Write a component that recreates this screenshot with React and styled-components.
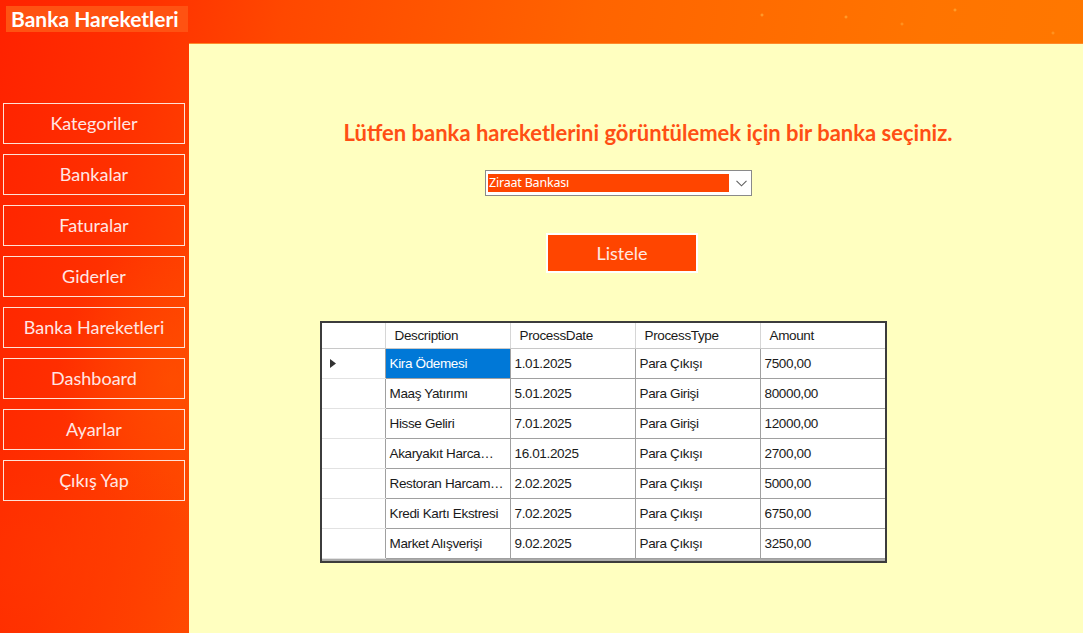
import React from 'react';
import styled, { createGlobalStyle } from 'styled-components';

const GlobalStyle = createGlobalStyle`
  html, body {
    margin: 0;
    padding: 0;
    height: 100%;
    overflow: hidden;
  }
  #root {
    height: 100%;
  }
`;

const Shell = styled.div`
  display: grid;
  grid-template-columns: 189px 1fr;
  grid-template-rows: 43px 1fr;
  height: 100vh;
  width: 100vw;
  font-family: 'Lato', 'Open Sans', sans-serif;
  background:
    radial-gradient(ellipse 220px 180px at 60px 560px, rgba(255, 60, 0, 0.5), transparent 70%),
    radial-gradient(ellipse 160px 200px at 170px 380px, rgba(255, 90, 0, 0.45), transparent 70%),
    linear-gradient(100deg, #ff2200 0%, #ff3000 12%, #ff4800 24%, #ff6400 50%, #ff7400 78%, #ff7a00 100%);
`;

const TopBar = styled.header`
  grid-column: 1 / -1;
  display: flex;
  align-items: flex-start;
  padding: 6px 0 0 6px;
  background-image:
    radial-gradient(circle 2px at 762px 15px, #ffb040, transparent),
    radial-gradient(circle 2px at 846px 17px, #ffb040, transparent),
    radial-gradient(circle 2px at 902px 24px, #ffa030, transparent),
    radial-gradient(circle 2px at 955px 10px, #ffb040, transparent),
    radial-gradient(circle 2px at 1053px 33px, #ffa030, transparent);
`;

const AppTitle = styled.div`
  background: #ff5212;
  color: #ffffff;
  font-weight: 700;
  font-size: 21px;
  line-height: 26px;
  width: 182px;
  box-sizing: border-box;
  padding-left: 5px;
  white-space: nowrap;
`;

const Sidebar = styled.nav`
  display: flex;
  flex-direction: column;
  gap: 10px;
  padding: 60px 4px 0 3px;
`;

const NavButton = styled.button`
  height: 41px;
  width: 182px;
  background: transparent;
  border: 1px solid #ffe2d6;
  color: #ffe6e4;
  font-family: 'Lato', 'Open Sans', sans-serif;
  font-size: 18px;
  line-height: 1;
  cursor: pointer;
  padding: 0 0 2px;
`;

const Main = styled.main`
  background: #ffffc0;
  border-top: 1px solid #ff8a2a;
  display: flex;
  flex-direction: column;
  align-items: flex-start;
`;

const Prompt = styled.h1`
  margin: 76px 0 0 149px;
  width: 620px;
  text-align: center;
  font-size: 22px;
  font-weight: 700;
  color: #ff4f14;
  line-height: 26px;
  white-space: nowrap;
`;

const Combo = styled.div`
  margin: 24px 0 0 296px;
  width: 267px;
  height: 26px;
  box-sizing: border-box;
  background: #ffffff;
  border: 1px solid #8a8a8a;
  display: flex;
  align-items: center;
  padding: 0 0 0 2px;
`;

const ComboValue = styled.div`
  flex: 0 0 241px;
  height: 18px;
  background: #ff4500;
  color: #ffffff;
  font-family: 'Noto Sans', 'Liberation Sans', sans-serif;
  font-size: 12.5px;
  line-height: 18px;
  letter-spacing: -0.2px;
  padding-left: 1px;
  box-sizing: border-box;
`;

const ComboArrow = styled.div`
  flex: 1;
  display: flex;
  justify-content: center;
  align-items: center;
  padding-left: 2px;
`;

const ListButton = styled.button`
  margin: 37px 0 0 357px;
  width: 152px;
  height: 40px;
  background: #ff4500;
  border: 2px solid #ffffff;
  color: #ffe8e0;
  font-family: 'Lato', 'Open Sans', sans-serif;
  font-size: 18px;
  padding: 0;
`;

const GridFrame = styled.div`
  margin: 48px 0 0 131px;
  width: 563px;
  height: 238px;
  border: 2px solid #3c3c3c;
  background: #ababab;
  overflow: hidden;
`;

const Table = styled.table`
  border-collapse: collapse;
  table-layout: fixed;
  width: 563px;
  font-family: 'Liberation Sans', Arial, sans-serif;
  font-size: 13.5px;
  letter-spacing: -0.35px;
  color: #1a1a1a;
  background: #ffffff;
`;

const HeadCell = styled.th`
  height: 25px;
  padding: 0 0 0 ${(p) => (p.$corner ? 0 : 9)}px;
  text-align: left;
  font-weight: 400;
  border-right: 1px solid #d6d6d6;
  border-bottom: 1px solid #c8c8c8;
  width: ${(p) => p.$w}px;
  box-sizing: border-box;
`;

const RowHead = styled.td`
  height: 30px;
  padding: 0 0 0 8px;
  border-right: 1px solid #a0a0a0;
  border-bottom: 1px solid #e2e2e2;
  box-sizing: border-box;
`;

const Cell = styled.td`
  height: 30px;
  padding: 0 5px 0 4px;
  border-right: 1px solid #a0a0a0;
  border-bottom: 1px solid #a0a0a0;
  background: ${(p) => (p.$selected ? '#0078d7' : '#ffffff')};
  color: ${(p) => (p.$selected ? '#ffffff' : '#1a1a1a')};
  white-space: nowrap;
  overflow: hidden;
  text-overflow: ellipsis;
  box-sizing: border-box;
`;

const navItems = [
  'Kategoriler',
  'Bankalar',
  'Faturalar',
  'Giderler',
  'Banka Hareketleri',
  'Dashboard',
  'Ayarlar',
  'Çıkış Yap',
];

const columns = [
  { title: 'Description', w: 125 },
  { title: 'ProcessDate', w: 125 },
  { title: 'ProcessType', w: 125 },
  { title: 'Amount', w: 125 },
];

const rows = [
  ['Kira Ödemesi', '1.01.2025', 'Para Çıkışı', '7500,00'],
  ['Maaş Yatırımı', '5.01.2025', 'Para Girişi', '80000,00'],
  ['Hisse Geliri', '7.01.2025', 'Para Girişi', '12000,00'],
  ['Akaryakıt Harcaması', '16.01.2025', 'Para Çıkışı', '2700,00'],
  ['Restoran Harcaması', '2.02.2025', 'Para Çıkışı', '5000,00'],
  ['Kredi Kartı Ekstresi', '7.02.2025', 'Para Çıkışı', '6750,00'],
  ['Market Alışverişi', '9.02.2025', 'Para Çıkışı', '3250,00'],
];

function RowPointer() {
  return (
    <svg width="7" height="9" viewBox="0 0 7 9">
      <path d="M0 0 L6 4.5 L0 9 Z" fill="#333" />
    </svg>
  );
}

export default function App() {
  return (
    <>
      <GlobalStyle />
      <Shell>
        <TopBar>
          <AppTitle>Banka Hareketleri</AppTitle>
        </TopBar>
        <Sidebar>
          {navItems.map((item) => (
            <NavButton key={item}>{item}</NavButton>
          ))}
        </Sidebar>
        <Main>
          <Prompt>Lütfen banka hareketlerini görüntülemek için bir banka seçiniz.</Prompt>
          <Combo>
            <ComboValue>Ziraat Bankası</ComboValue>
            <ComboArrow>
              <svg width="11" height="7" viewBox="0 0 11 7">
                <polyline points="0.5,0.8 5.5,5.8 10.5,0.8" fill="none" stroke="#606060" strokeWidth="1.1" />
              </svg>
            </ComboArrow>
          </Combo>
          <ListButton>Listele</ListButton>
          <GridFrame>
            <Table>
              <thead>
                <tr>
                  <HeadCell $corner $w={63} />
                  {columns.map((c) => (
                    <HeadCell key={c.title} $w={c.w}>
                      {c.title}
                    </HeadCell>
                  ))}
                </tr>
              </thead>
              <tbody>
                {rows.map((r, i) => (
                  <tr key={r[0]}>
                    <RowHead>{i === 0 && <RowPointer />}</RowHead>
                    {r.map((v, j) => (
                      <Cell key={j} $selected={i === 0 && j === 0}>
                        {v}
                      </Cell>
                    ))}
                  </tr>
                ))}
              </tbody>
            </Table>
          </GridFrame>
        </Main>
      </Shell>
    </>
  );
}
